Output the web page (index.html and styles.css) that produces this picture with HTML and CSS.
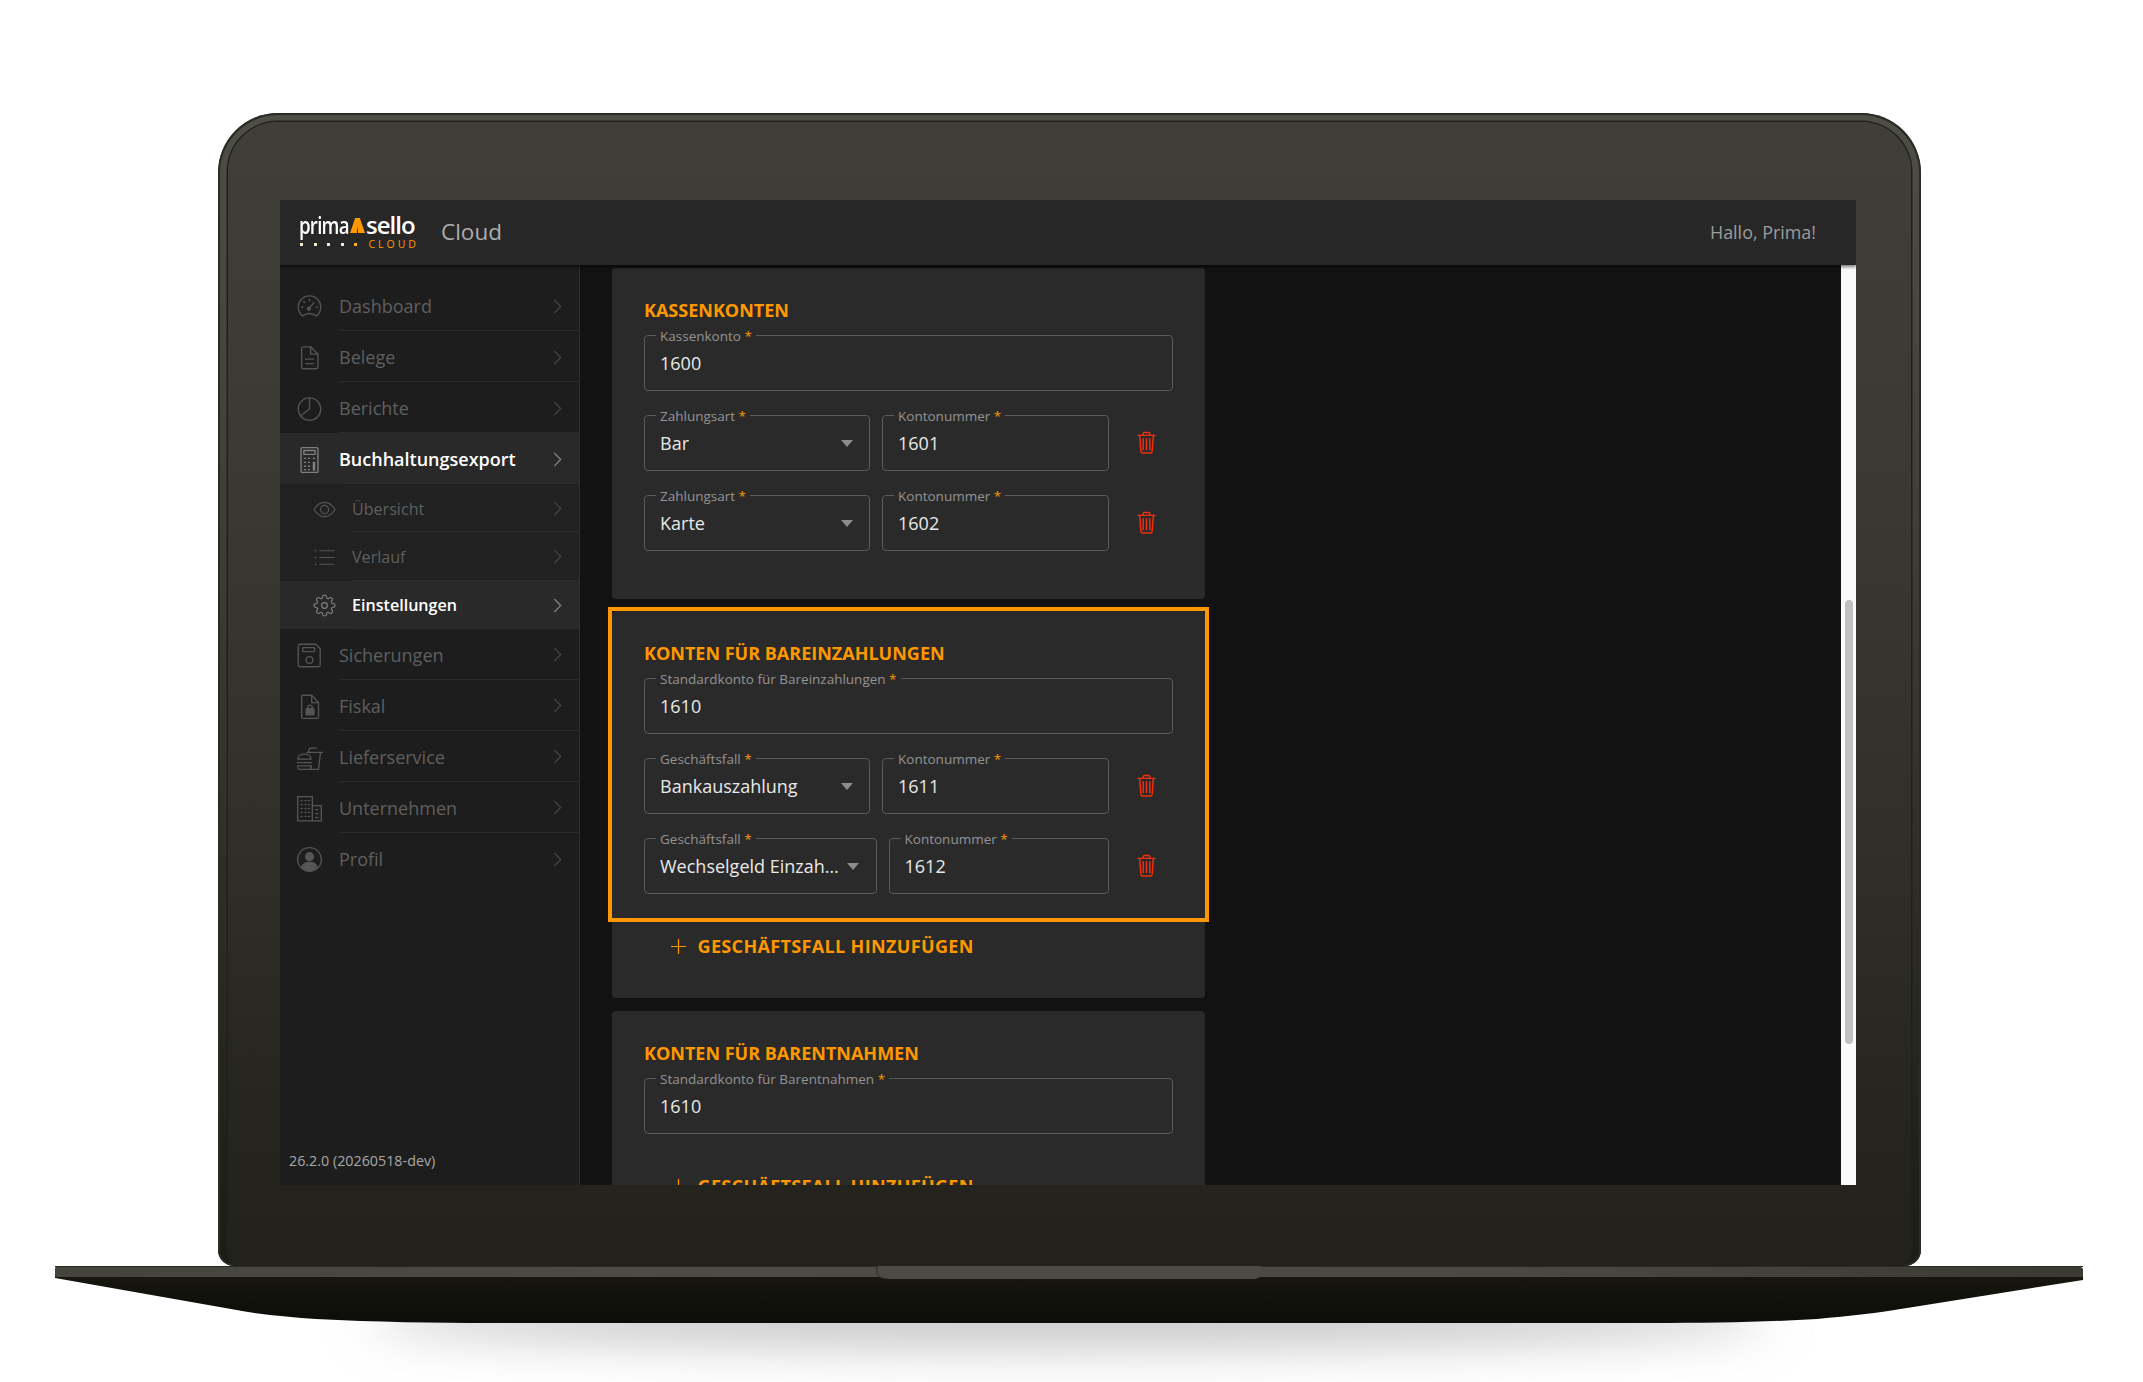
FILE: index.html
```html
<!DOCTYPE html>
<html lang="de">
<head>
<meta charset="utf-8">
<title>primasello Cloud</title>
<link rel="stylesheet" href="styles.css">
</head>
<body>
<div class="page">
  <div class="shell">
    <div class="bezel">
      <div class="screen">
        <header class="topbar">
          <div class="logo">
            <div class="logo-word"><span class="logo-prima">prima</span><svg class="logo-tri" viewBox="0 0 16 16"><path d="M5.5 0h5L16 16H8.6L8 8 7.4 16H0z" fill="#ff9800"/></svg><span>sello</span></div>
            <div class="logo-sub"><span class="logo-dots"><i></i><i></i><i></i><i></i><i class="logo-dot-o"></i></span><span class="logo-cloud">CLOUD</span></div>
          </div>
          <div class="product">Cloud</div>
          <div class="greeting">Hallo, Prima!</div>
        </header>
        <div class="workspace">
          <nav class="sidebar">
            <a class="nav"><span class="nav-ico"><svg viewBox="0 0 24 24"><path d="M6 20.5C3.4 18.600 2 15.500 2 12.500a10 10 0 0 1 20 0c0 3-1.400 6.100-4 8-3.500-3-8.500-3-12 0z"/><path d="M11 14.500l5-6"/><circle cx="11.500" cy="14" r="1.300"/><path d="M12 5.500v1.500M6.800 7.500l1 1M4.800 12.500h1.500M18 12.500h1.500"/></svg></span><span class="nav-body"><span>Dashboard</span><svg class="chev" viewBox="0 0 8 14"><path d="M1 1l6 6-6 6"/></svg></span></a>
            <a class="nav"><span class="nav-ico"><svg viewBox="0 0 24 24"><path d="M5 4a1.500 1.500 0 0 1 1.500-1.500H13L19.500 9v11.500A1.500 1.500 0 0 1 18 22H6.500A1.500 1.500 0 0 1 5 20.500z"/><path d="M13 2.500V9h6.500M8.500 13.500h7M8.500 17.500h7"/></svg></span><span class="nav-body"><span>Belege</span><svg class="chev" viewBox="0 0 8 14"><path d="M1 1l6 6-6 6"/></svg></span></a>
            <a class="nav"><span class="nav-ico"><svg viewBox="0 0 24 24"><circle cx="12" cy="12.500" r="10"/><path d="M12 2.500v10l-8 6"/></svg></span><span class="nav-body"><span>Berichte</span><svg class="chev" viewBox="0 0 8 14"><path d="M1 1l6 6-6 6"/></svg></span></a>
            <a class="nav nav-on"><span class="nav-ico"><svg viewBox="0 0 24 24"><rect x="4.500" y="1.500" width="15" height="22" rx="1"/><rect x="7" y="4" width="10" height="3.500"/><path d="M7.500 11h1M11 11h1M7.500 14.500h1M11 14.500h1M7.500 18h1M11 18h1M7.500 21h1M11 21h1M15.500 11h1M15.500 14.500h1v7h-1z"/></svg></span><span class="nav-body"><span>Buchhaltungsexport</span><svg class="chev" viewBox="0 0 8 14"><path d="M1 1l6 6-6 6"/></svg></span></a>
            <a class="nav nav-sub"><span class="nav-ico"><svg viewBox="0 0 24 24"><path d="M1 12c3-5 7-7.500 11-7.500S20 7 23 12c-3 5-7 7.500-11 7.500S4 17 1 12z"/><circle cx="12" cy="12" r="4.300"/></svg></span><span class="nav-body"><span>Übersicht</span><svg class="chev" viewBox="0 0 8 14"><path d="M1 1l6 6-6 6"/></svg></span></a>
            <a class="nav nav-sub"><span class="nav-ico"><svg viewBox="0 0 24 24"><path d="M7 5h15M7 12h15M7 19h15M2 5h1.500M2 12h1.500M2 19h1.500"/></svg></span><span class="nav-body"><span>Verlauf</span><svg class="chev" viewBox="0 0 8 14"><path d="M1 1l6 6-6 6"/></svg></span></a>
            <a class="nav nav-sub nav-on"><span class="nav-ico"><svg viewBox="0 0 24 24"><circle cx="12" cy="12" r="3"/><path d="M19.400 15a1.650 1.650 0 0 0 .33 1.820l.06.06a2 2 0 0 1 0 2.830 2 2 0 0 1-2.830 0l-.06-.06a1.650 1.650 0 0 0-1.820-.33 1.650 1.650 0 0 0-1 1.510V21a2 2 0 0 1-2 2 2 2 0 0 1-2-2v-.09A1.650 1.650 0 0 0 9 19.400a1.650 1.650 0 0 0-1.820.33l-.06.06a2 2 0 0 1-2.830 0 2 2 0 0 1 0-2.830l.06-.06a1.650 1.650 0 0 0 .33-1.820 1.650 1.650 0 0 0-1.510-1H3a2 2 0 0 1-2-2 2 2 0 0 1 2-2h.09A1.650 1.650 0 0 0 4.600 9a1.650 1.650 0 0 0-.33-1.820l-.06-.06a2 2 0 0 1 0-2.830 2 2 0 0 1 2.830 0l.06.06a1.650 1.650 0 0 0 1.820.33H9a1.650 1.650 0 0 0 1-1.510V3a2 2 0 0 1 2-2 2 2 0 0 1 2 2v.09a1.650 1.650 0 0 0 1 1.510 1.650 1.650 0 0 0 1.820-.33l.06-.06a2 2 0 0 1 2.830 0 2 2 0 0 1 0 2.830l-.06.06a1.650 1.650 0 0 0-.33 1.820V9a1.650 1.650 0 0 0 1.510 1H21a2 2 0 0 1 2 2 2 2 0 0 1-2 2h-.09a1.650 1.650 0 0 0-1.510 1z"/></svg></span><span class="nav-body"><span>Einstellungen</span><svg class="chev" viewBox="0 0 8 14"><path d="M1 1l6 6-6 6"/></svg></span></a>
            <a class="nav"><span class="nav-ico"><svg viewBox="0 0 24 24"><path d="M3.500 2h14l4 4v14.500A1.500 1.500 0 0 1 20 22H3.500A1.500 1.500 0 0 1 2 20.500v-17A1.500 1.500 0 0 1 3.500 2z"/><rect x="6" y="5" width="10.500" height="3.500" rx=".5"/><circle cx="12" cy="16" r="3"/></svg></span><span class="nav-body"><span>Sicherungen</span><svg class="chev" viewBox="0 0 8 14"><path d="M1 1l6 6-6 6"/></svg></span></a>
            <a class="nav"><span class="nav-ico"><svg viewBox="0 0 24 24"><path d="M5 3.500A1.500 1.500 0 0 1 6.500 2H14l6 6.500V21a1.500 1.500 0 0 1-1.500 1.500h-12A1.500 1.500 0 0 1 5 21z"/><path d="M14 2v6.500h6"/><rect class="ico-fill" x="9" y="14" width="7" height="5.500" rx=".6"/><path d="M10.500 14v-1.200a2 2 0 0 1 4 0V14"/></svg></span><span class="nav-body"><span>Fiskal</span><svg class="chev" viewBox="0 0 8 14"><path d="M1 1l6 6-6 6"/></svg></span></a>
            <a class="nav"><span class="nav-ico"><svg viewBox="0 0 24 24"><path d="M9.500 7.500h14M11 7.500l1-3.500 6-.5M21.800 7.500L20 22.500h-7"/><path d="M1.500 13.500C1.500 10.500 4.500 9 7.500 9s6 1.500 6 4.500zM1 16.500h13M1.500 19.500h12v1a2 2 0 0 1-2 2h-8a2 2 0 0 1-2-2z"/></svg></span><span class="nav-body"><span>Lieferservice</span><svg class="chev" viewBox="0 0 8 14"><path d="M1 1l6 6-6 6"/></svg></span></a>
            <a class="nav"><span class="nav-ico"><svg viewBox="0 0 24 24"><path d="M1.500 23V1.500h13V23zM14.500 9.500h8V23h-8z"/><path d="M4.500 5h1M8 5h1M11 5h1M4.500 8.500h1M8 8.500h1M11 8.500h1M4.500 12h1M8 12h1M11 12h1M4.500 15.500h1M8 15.500h1M11 15.500h1M4.500 19h1M8 19h1M11 19h1M17.500 13h2M17.500 16.500h2M17.500 20h2"/></svg></span><span class="nav-body"><span>Unternehmen</span><svg class="chev" viewBox="0 0 8 14"><path d="M1 1l6 6-6 6"/></svg></span></a>
            <a class="nav nav-last"><span class="nav-ico"><svg viewBox="0 0 24 24"><circle cx="12" cy="12" r="10.500"/><circle class="ico-fill" cx="12" cy="9.500" r="3.500"/><path class="ico-fill" d="M5 19c1-3.500 4-4.500 7-4.500s6 1 7 4.500c-2 2-4.500 3-7 3s-5-1-7-3z"/></svg></span><span class="nav-body"><span>Profil</span><svg class="chev" viewBox="0 0 8 14"><path d="M1 1l6 6-6 6"/></svg></span></a>
            <div class="version">26.2.0 (20260518-dev)</div>
          </nav>
          <main class="content">
            <section class="card">
              <h2 class="card-title">KASSENKONTEN</h2>
              <div class="field"><label class="field-label">Kassenkonto <b>*</b></label><span class="field-value">1600</span></div>
              <div class="row">
                <div class="field"><label class="field-label">Zahlungsart <b>*</b></label><span class="field-value">Bar</span><i class="caret"></i></div>
                <div class="field"><label class="field-label">Kontonummer <b>*</b></label><span class="field-value">1601</span></div>
                <button class="trash"><svg viewBox="0 0 20 24"><path d="M1 4.500h18M6.500 4.500V2.700A1.200 1.200 0 0 1 7.700 1.500h4.600a1.200 1.200 0 0 1 1.200 1.200v1.800M2.800 4.500l1.300 17a1.500 1.500 0 0 0 1.500 1.500h8.800a1.500 1.500 0 0 0 1.500-1.500l1.300-17M6.500 8v11.500M10 8v11.500M13.500 8v11.500"/></svg></button>
              </div>
              <div class="row">
                <div class="field"><label class="field-label">Zahlungsart <b>*</b></label><span class="field-value">Karte</span><i class="caret"></i></div>
                <div class="field"><label class="field-label">Kontonummer <b>*</b></label><span class="field-value">1602</span></div>
                <button class="trash"><svg viewBox="0 0 20 24"><path d="M1 4.500h18M6.500 4.500V2.700A1.200 1.200 0 0 1 7.700 1.500h4.600a1.200 1.200 0 0 1 1.200 1.200v1.800M2.800 4.500l1.300 17a1.500 1.500 0 0 0 1.500 1.500h8.800a1.500 1.500 0 0 0 1.500-1.500l1.300-17M6.500 8v11.500M10 8v11.500M13.500 8v11.500"/></svg></button>
              </div>
            </section>
            <section class="card card-marked">
              <div class="marker"></div>
              <h2 class="card-title">KONTEN FÜR BAREINZAHLUNGEN</h2>
              <div class="field"><label class="field-label">Standardkonto für Bareinzahlungen <b>*</b></label><span class="field-value">1610</span></div>
              <div class="row">
                <div class="field"><label class="field-label">Geschäftsfall <b>*</b></label><span class="field-value">Bankauszahlung</span><i class="caret"></i></div>
                <div class="field"><label class="field-label">Kontonummer <b>*</b></label><span class="field-value">1611</span></div>
                <button class="trash"><svg viewBox="0 0 20 24"><path d="M1 4.500h18M6.500 4.500V2.700A1.200 1.200 0 0 1 7.700 1.500h4.600a1.200 1.200 0 0 1 1.200 1.200v1.800M2.800 4.500l1.300 17a1.500 1.500 0 0 0 1.500 1.500h8.800a1.500 1.500 0 0 0 1.500-1.500l1.300-17M6.500 8v11.500M10 8v11.500M13.500 8v11.500"/></svg></button>
              </div>
              <div class="row row-wide">
                <div class="field"><label class="field-label">Geschäftsfall <b>*</b></label><span class="field-value">Wechselgeld Einzahlung</span><i class="caret"></i></div>
                <div class="field"><label class="field-label">Kontonummer <b>*</b></label><span class="field-value">1612</span></div>
                <button class="trash"><svg viewBox="0 0 20 24"><path d="M1 4.500h18M6.500 4.500V2.700A1.200 1.200 0 0 1 7.700 1.500h4.600a1.200 1.200 0 0 1 1.200 1.200v1.800M2.800 4.500l1.300 17a1.500 1.500 0 0 0 1.500 1.500h8.800a1.500 1.500 0 0 0 1.500-1.500l1.300-17M6.500 8v11.500M10 8v11.500M13.500 8v11.500"/></svg></button>
              </div>
              <button class="add"><svg viewBox="0 0 16 16"><path d="M8 0v16M0 8h16"/></svg><span>GESCHÄFTSFALL HINZUFÜGEN</span></button>
            </section>
            <section class="card">
              <h2 class="card-title">KONTEN FÜR BARENTNAHMEN</h2>
              <div class="field"><label class="field-label">Standardkonto für Barentnahmen <b>*</b></label><span class="field-value">1610</span></div>
              <button class="add"><svg viewBox="0 0 16 16"><path d="M8 0v16M0 8h16"/></svg><span>GESCHÄFTSFALL HINZUFÜGEN</span></button>
            </section>
          </main>
          <div class="scrolltrack"><div class="scrollthumb"></div></div>
        </div>
      </div>
    </div>
  </div>
  <svg class="base" viewBox="0 0 2028 116" aria-hidden="true">
    <defs>
      <filter id="soft" x="-20%" y="-150%" width="140%" height="400%"><feGaussianBlur stdDeviation="24"/></filter>
      <linearGradient id="lip" x1="0" x2="1" y1="0" y2="0">
        <stop offset="0" stop-color="#44443c"/><stop offset=".3" stop-color="#4c4c44"/><stop offset=".7" stop-color="#4a4a42"/><stop offset="1" stop-color="#3a3a33"/>
      </linearGradient>
      <linearGradient id="under" x1="0" x2="0" y1="0" y2="1">
        <stop offset="0" stop-color="#17170f"/><stop offset="1" stop-color="#0c0c09"/>
      </linearGradient>
    </defs>
    <ellipse cx="1014" cy="52" rx="700" ry="30" fill="#c6c6c6" filter="url(#soft)"/>
    <path d="M0 12L176 43C205 49 235 51 261 53C320 56 380 57 436 57H1595C1660 57 1710 56 1762 53C1795 50 1822 47 1852 42L2028 14V10H0z" fill="url(#under)"/>
    <path d="M0 3a3 3 0 0 1 3-3H2022a6 6 0 0 1 6 3V11H0z" fill="url(#lip)"/>
    <rect y="0" width="2028" height="1" fill="#2a2a24"/>
    <path d="M822 0H1206V8C1206 11 1203 13 1198 13H834C826 13 822 10 822 6z" fill="#4b4b43"/>
    <path d="M822 0V7C822 10 826 13 834 13" fill="none" stroke="#2c2c26" stroke-width="1"/>
  </svg>
</div>
</body>
</html>
```
FILE: styles.css
```css
* { box-sizing: border-box; }
html, body { margin: 0; height: 100%; background: #fff; }
body { overflow: hidden; font-family: "Open Sans", "Noto Sans", sans-serif; }

.page { width: 2143px; height: 1382px; padding-top: 113px; overflow: hidden; }

/* laptop */
.shell {
  margin-left: 218px;
  width: 1703px;
  height: 1153px;
  padding: 9px 10px 0;
  border-radius: 60px 60px 16px 16px;
  background: linear-gradient(180deg, #4e4e46 0%, #41413a 30%, #2c2c25 70%, #1c1c17 100%);
  box-shadow: inset 0 0 0 2px #2b2b25;
}
.bezel {
  height: 100%;
  padding: 78px 55px 0 52px;
  border-radius: 50px 50px 14px 14px;
  background: linear-gradient(180deg, #3f3f37 0%, #3a3a32 30%, #2f2e27 65%, #26251e 85%, #22211b 100%);
  box-shadow: 0 0 0 1.500px #20201b;
}
.screen { width: 1576px; height: 985px; display: flex; flex-direction: column; overflow: hidden; background: #121212; }

/* top bar */
.topbar {
  position: relative;
  z-index: 2;
  flex: none;
  height: 65px;
  display: flex;
  align-items: center;
  padding: 0 40px 2px 19px;
  background: #272727;
  box-shadow: 0 2px 3px rgba(0,0,0,.5);
}
.logo { width: 123px; display: flex; flex-direction: column; color: #fff; margin-top: -2px; }
.logo-word { display: flex; align-items: flex-end; height: 26px; font-size: 24px; font-weight: 600; letter-spacing: -1px; line-height: 26px; }
.logo-prima { display: block; flex: none; width: 51px; transform: scaleX(.78); transform-origin: left center; }
.logo-tri { width: 15px; height: 15px; margin: 0 1px 5px 0; flex: none; }
.logo-sub { display: flex; align-items: center; justify-content: space-between; width: 117px; height: 10px; margin-top: 1px; padding-left: 1px; }
.logo-dots { display: flex; gap: 10.500px; }
.logo-dots i { display: block; width: 3px; height: 3px; background: #f5e8d0; }
.logo-dots .logo-dot-o { background: #ffb020; }
.logo-cloud { color: #ff9800; font-size: 10.500px; font-weight: 400; letter-spacing: 3px; line-height: 10px; margin-right: -3px; }
.product { margin-left: 19px; color: #adadad; font-size: 22.500px; line-height: 30px; }
.greeting { margin-left: auto; color: #9c9c9c; font-size: 17.900px; line-height: 24px; }

/* workspace */
.workspace { flex: 1; min-height: 0; display: flex; }

/* sidebar */
.sidebar {
  flex: none;
  width: 300px;
  display: flex;
  flex-direction: column;
  padding-top: 15px;
  background: #1d1d1d;
  border-right: 1px solid #2e2e2e;
}
.nav { flex: none; display: flex; height: 51px; color: #5f5f5f; font-size: 18px; }
.nav-ico { flex: none; width: 59px; padding: 2px 1px 0 0; display: flex; align-items: center; justify-content: center; }
.nav-ico svg { width: 27px; height: 27px; fill: none; stroke: #555; stroke-width: 1.200; stroke-linecap: round; stroke-linejoin: round; }
.nav-ico .ico-fill { fill: #555; }
.nav-body { flex: 1; display: flex; align-items: center; justify-content: space-between; padding: 2px 17px 0 0; border-bottom: 1px solid #2b2b2b; }
.nav-last .nav-body { border-bottom: 0; }
.chev { width: 9px; height: 15px; fill: none; stroke: #444; stroke-width: 1.200; }
.nav-on { background: #292929; color: #fff; font-weight: 600; }
.nav-on .nav-ico svg { stroke: #808080; }
.nav-on .chev { stroke: #808080; }
.nav-sub { height: 48.330px; font-size: 16.100px; background: #212121; }
.nav-sub .nav-ico { width: 72px; padding: 2px 0 0 16px; }
.nav-sub .nav-ico svg { width: 23px; height: 23px; }
.nav-sub.nav-on { background: #292929; }
.version { margin-top: auto; padding: 0 0 14px 9px; color: #a8a8a8; font-size: 14.300px; line-height: 20px; }

/* content */
.content { flex: 1; min-width: 0; padding: 3px 0 0 32px; overflow: hidden; }
.card {
  position: relative;
  width: 593px;
  margin-bottom: 12px;
  padding: 30px 32px 48.500px 32px;
  border-radius: 4px;
  background: #2a2a2a;
}
.card-marked { padding-bottom: 40px; margin-bottom: 13px; }
.marker { position: absolute; top: -4px; left: -4px; right: -4px; height: 315px; border: 4px solid #ff9800; pointer-events: none; }
.card-title { margin: 0 0 13px; color: #ff9800; font-size: 18px; font-weight: 700; line-height: 24px; }

.field {
  position: relative;
  display: flex;
  align-items: center;
  height: 55.500px;
  padding: 0 38px 0 15px;
  border: 1px solid #5a5a5a;
  border-radius: 4px;
}
.field-label {
  position: absolute;
  top: -9.500px;
  left: 11px;
  padding: 0 4px;
  background: #2a2a2a;
  color: #949494;
  font-size: 13.500px;
  line-height: 18px;
  white-space: nowrap;
}
.field-label b { color: #ff9800; font-weight: 400; }
.field-value { color: #e9e9e9; font-size: 18px; line-height: 24px; white-space: nowrap; overflow: hidden; text-overflow: ellipsis; }
.caret {
  position: absolute;
  top: 24px;
  right: 16.500px;
  width: 0;
  height: 0;
  border-left: 6px solid transparent;
  border-right: 6px solid transparent;
  border-top: 7px solid #8c8c8c;
}
.row { display: grid; grid-template-columns: 226px 227px 62px; column-gap: 12px; margin-top: 24.500px; }
.row-wide { grid-template-columns: 232.500px 220.500px 62px; }
.row-wide .field:first-child { padding-right: 33px; }
.trash { display: flex; align-items: center; justify-content: center; padding: 0 12px 0 0; border: 0; background: none; }
.trash svg { width: 19px; height: 23px; fill: none; stroke: #f5300a; stroke-width: 1.500; stroke-linejoin: round; stroke-linecap: round; }

.add {
  display: flex;
  align-items: center;
  gap: 11.500px;
  margin: 40.500px 0 0 27px;
  padding: 0;
  border: 0;
  background: none;
  color: #ff9800;
  font: 700 18px/24px "Open Sans", "Noto Sans", sans-serif;
  letter-spacing: .35px;
  white-space: nowrap;
}
.add svg { width: 15px; height: 15px; fill: none; stroke: #ff9800; stroke-width: 1.300; }

/* scrollbar */
.scrolltrack { flex: none; width: 15px; padding: 335px 3px 0 4px; background: #fafafa; }
.scrollthumb { height: 444px; border-radius: 4px; background: #c1c1c1; }

/* base */
.base { display: block; width: 2028px; height: 116px; margin-left: 55px; }
```
